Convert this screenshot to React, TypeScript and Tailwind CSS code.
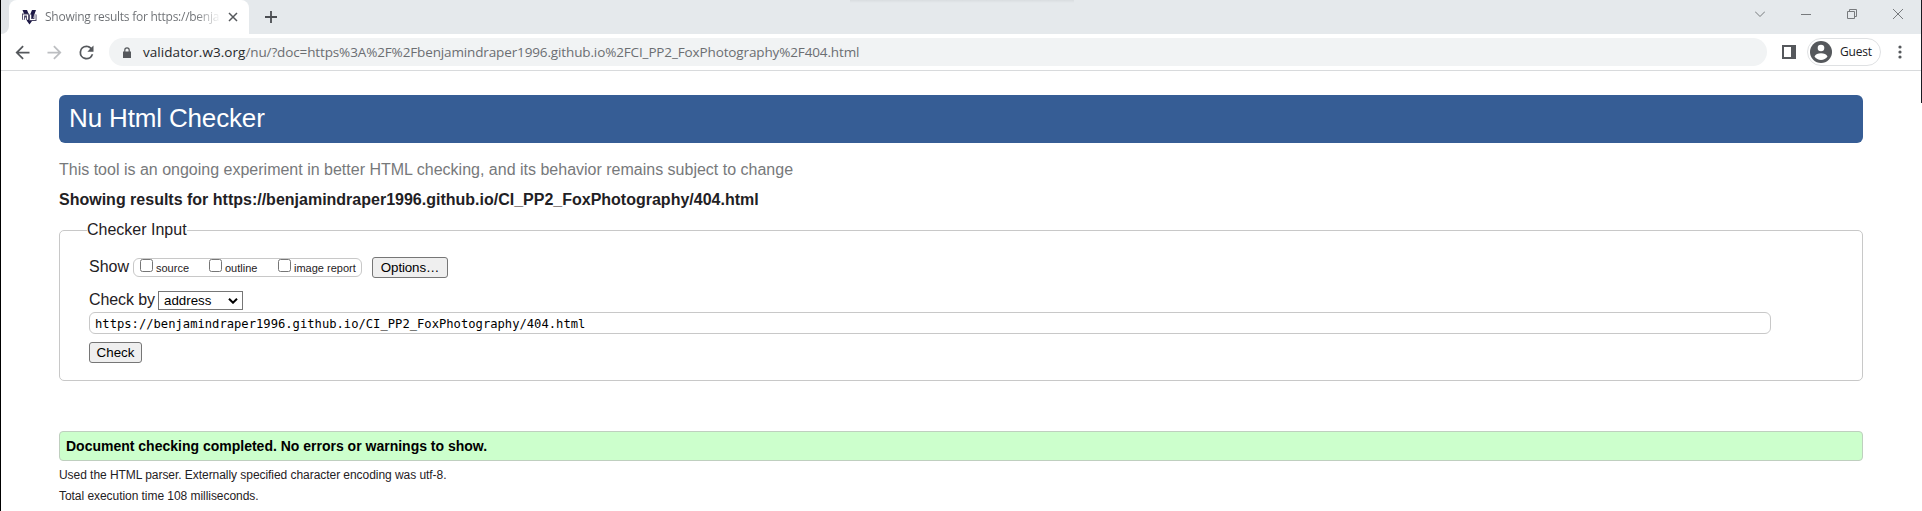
import React from "react";

const Arrow = ({ flip }: { flip?: boolean }) => (
  <svg viewBox="0 0 24 24" className={flip ? "size-[21px] -scale-x-100 fill-[#bcbec1]" : "size-[21px] fill-[#55585c]"}>
    <path d="M20 11H7.83l5.59-5.59L12 4l-8 8 8 8 1.41-1.41L7.83 13H20v-2z" />
  </svg>
);

function TabStrip() {
  return (
    <div className="flex h-[34px] items-stretch bg-[#e5e9ec]">
      <div className="flex w-[8px] items-end bg-white">
        <div className="h-full w-full rounded-br-lg bg-[#e1e4e7]" />
      </div>
      <div className="flex w-[240px] items-center rounded-t-lg bg-white pl-[12px]">
        <svg viewBox="0 0 16 16" className="size-4 shrink-0">
          <path d="M1.500 1H6l2.500 6L11 1h4l-4 11-2.500 3.500L6 12z" fill="#1d1846" />
          <path d="M2.500 10.800V6h4v4.800M9.500 5.500v5H14v-5" fill="none" stroke="#4a4665" strokeWidth="3" />
          <path d="M2.500 10.800V6h4v4.800M9.500 5.500v5H14v-5" fill="none" stroke="#fff" strokeWidth="1.200" />
        </svg>
        <div className="ml-2 w-[176px] whitespace-nowrap bg-linear-to-r from-[#6b6e72] from-85% to-transparent bg-clip-text font-['Open_Sans',sans-serif] text-[12px] leading-[16px] tracking-[-0.26px] text-transparent">
          Showing results for https://benja
        </div>
        <svg viewBox="0 0 10 10" className="ml-[7px] size-[10px] shrink-0 fill-none stroke-[#55585c] stroke-[1.5]">
          <path d="M1 1l8 8M9 1l-8 8" />
        </svg>
      </div>
      <div className="flex flex-1 items-center pl-[16px]">
        <svg viewBox="0 0 12 12" className="size-3 fill-none stroke-[#4b4e52] stroke-[1.8]">
          <path d="M6 0v12M0 6h12" />
        </svg>
        <div className="ml-[573px] h-[3px] w-[224px] self-start bg-linear-to-b from-[#d9dde0] to-[#e5e9ec]" />
      </div>
      <div className="flex items-start gap-[36px] pr-[18px] pt-[9px]">
        <svg viewBox="0 0 10 10" className="size-[10px] fill-none stroke-[#777a7d]">
          <path d="M0 2.500l5 5 5-5" />
        </svg>
        <svg viewBox="0 0 10 10" className="size-[10px] fill-none stroke-[#777a7d]">
          <path d="M0 5.500h10" />
        </svg>
        <svg viewBox="0 0 10 10" className="size-[10px] fill-none stroke-[#777a7d]">
          <path d="M.5 2.500h7v7h-7zM2.500 2.500v-2h7v7h-2" />
        </svg>
        <svg viewBox="0 0 10 10" className="size-[10px] fill-none stroke-[#777a7d]">
          <path d="M0 0l10 10M10 0L0 10" />
        </svg>
      </div>
    </div>
  );
}

function Toolbar() {
  return (
    <div className="flex h-[37px] items-center border-b border-[#d8dadc] bg-white pl-[11px]">
      <Arrow />
      <div className="ml-[11px] flex"><Arrow flip /></div>
      <svg viewBox="0 0 24 24" className="ml-[11px] size-[21px] fill-[#55585c]">
        <path d="M17.650 6.350A7.958 7.958 0 0 0 12 4a8 8 0 1 0 7.730 10h-2.080A6 6 0 1 1 12 6c1.660 0 3.140.69 4.220 1.780L13 11h7V4l-2.350 2.350z" />
      </svg>
      <div className="ml-[12px] flex h-[28px] w-[1658px] items-center rounded-full bg-[#f1f3f4] pl-[14px]">
        <svg viewBox="0 0 8 11" className="h-[11px] w-[8px] fill-[#55585c]">
          <path d="M0 4.500h8V11H0z" />
          <path d="M1.800 5V3a2.200 2.200 0 0 1 4.400 0v2" fill="none" stroke="#55585c" strokeWidth="1.200" />
        </svg>
        <span className="ml-[12px] whitespace-nowrap font-['Open_Sans',sans-serif] text-[13.500px] tracking-[-0.13px] text-[#6b6e72]">
          <span className="tracking-[0.06px] text-[#26282b]">validator.w3.org</span>
          /nu/?doc=https%3A%2F%2Fbenjamindraper1996.github.io%2FCI_PP2_FoxPhotography%2F404.html
        </span>
      </div>
      <svg viewBox="0 0 14 14" className="ml-[15px] size-[14px]">
        <path d="M0 0h14v14H0zM2 2v10h7V2z" fill="#55585c" fillRule="evenodd" />
      </svg>
      <div className="ml-[11px] flex h-[28px] w-[74px] items-center rounded-full border border-[#dfe1e3] pl-[2px]">
        <svg viewBox="0 0 22 22" className="size-[22px] shrink-0">
          <circle cx="11" cy="11" r="11" fill="#55585c" />
          <circle cx="11" cy="7" r="3.300" fill="#fff" />
          <path d="M4.500 15.500C5.500 13.200 8 12.200 11 12.200s5.500 1 6.500 3.300C16 17.800 13.700 19 11 19s-5-1.200-6.500-3.500z" fill="#fff" />
        </svg>
        <span className="ml-2 font-['Open_Sans',sans-serif] text-[12px] tracking-[-0.2px] text-[#202124]">Guest</span>
      </div>
      <svg viewBox="0 0 4 14" className="ml-[17px] h-[14px] w-[4px] fill-[#55585c]">
        <circle cx="2" cy="2" r="1.600" />
        <circle cx="2" cy="7" r="1.600" />
        <circle cx="2" cy="12" r="1.600" />
      </svg>
    </div>
  );
}

const Check = ({ label, className }: { label: string; className: string }) => (
  <label className={"flex items-start " + className}>
    <input type="checkbox" className="size-[13px] shrink-0 appearance-none rounded-[2.500px] border border-[#767676] bg-white" />
    <span className="ml-[3px] mt-[2px] whitespace-nowrap text-[11px] leading-[15px]">{label}</span>
  </label>
);

export default function App() {
  return (
    <div className="flex h-[511px] w-[1922px] overflow-hidden bg-white font-['Liberation_Sans',Arial,sans-serif] text-[#1f2124]">
      <div className="w-px bg-black" />
      <div className="w-[1920px]">
        <TabStrip />
        <Toolbar />
        <main className="ml-[58px] w-[1804px] pt-[24px]">
          <h1 className="h-[48px] rounded-[6px] bg-[#365d95] pl-[10px] text-[26px] leading-[46px] tracking-[-0.15px] text-white">
            Nu Html Checker
          </h1>
          <p className="mt-[16px] h-[21px] whitespace-nowrap text-[16px] leading-[21px] text-[#77797b]">
            This tool is an ongoing experiment in better HTML checking, and its behavior remains subject to change
          </p>
          <h2 className="mt-[9px] h-[21px] whitespace-nowrap text-[16px] font-bold leading-[21px]">
            Showing results for https://benjamindraper1996.github.io/CI_PP2_FoxPhotography/404.html
          </h2>
          <fieldset className="mt-[10px] h-[161px] rounded-[5px] border border-[#c8c8c8] pl-[29px]">
            <legend className="-ml-[2px] h-[20px] text-[16px] leading-[20px]">Checker Input</legend>
            <div className="mt-[17px] flex h-[21px] items-center">
              <span className="-mt-[2px] w-[44px] text-[16px] leading-[20px]">Show</span>
              <div className="flex h-[19px] w-[229px] items-start rounded-[6px] border border-[#c8c8c8] pl-[6px]">
                <Check label="source" className="w-[69px]" />
                <Check label="outline" className="w-[69px]" />
                <Check label="image report" className="" />
              </div>
              <button className="ml-[10px] h-[21px] w-[76px] rounded-[3px] border border-[#767676] bg-[#efefef] text-[13.333px] leading-[19px] tracking-[-0.12px] text-black">
                Options…
              </button>
            </div>
            <div className="mt-[13px] flex h-[19px] items-center">
              <span className="-mt-[2px] w-[69px] whitespace-nowrap text-[16px] leading-[19px] tracking-[-0.1px]">Check by</span>
              <div className="flex h-[19px] w-[85px] items-center justify-between border border-[#767676] bg-white pl-[5px] pr-[4px] text-[13.333px] leading-[17px] text-black">
                address
                <svg viewBox="0 0 10 6" className="h-[6px] w-[10px] fill-none stroke-black stroke-2">
                  <path d="M1 .7l4 4 4-4" />
                </svg>
              </div>
            </div>
            <div className="mt-[2px] flex h-[22px] w-[1682px] items-center rounded-[6px] border border-[#c8c8c8] pl-[5px] pt-[2px] font-['DejaVu_Sans_Mono',monospace] text-[12.170px] leading-[18px] text-black">
              https://benjamindraper1996.github.io/CI_PP2_FoxPhotography/404.html
            </div>
            <button className="mt-[8px] block h-[21px] w-[53px] rounded-[3px] border border-[#767676] bg-[#efefef] text-[13.333px] leading-[19px] text-black">
              Check
            </button>
          </fieldset>
          <div className="mt-[50px] h-[30px] rounded-[4px] border border-[#bfcfbf] bg-[#ccffcc] pl-[6px] text-[14px] font-bold leading-[29px] text-black">
            Document checking completed. No errors or warnings to show.
          </div>
          <p className="mt-[6px] h-[17px] text-[12px] leading-[17px] tracking-[-0.05px]">
            Used the HTML parser. Externally specified character encoding was utf-8.
          </p>
          <p className="mt-[4px] h-[17px] text-[12px] leading-[17px] tracking-[-0.05px]">Total execution time 108 milliseconds.</p>
        </main>
      </div>
      <div className="h-[103px] w-px bg-[#1a1a22]" />
    </div>
  );
}
